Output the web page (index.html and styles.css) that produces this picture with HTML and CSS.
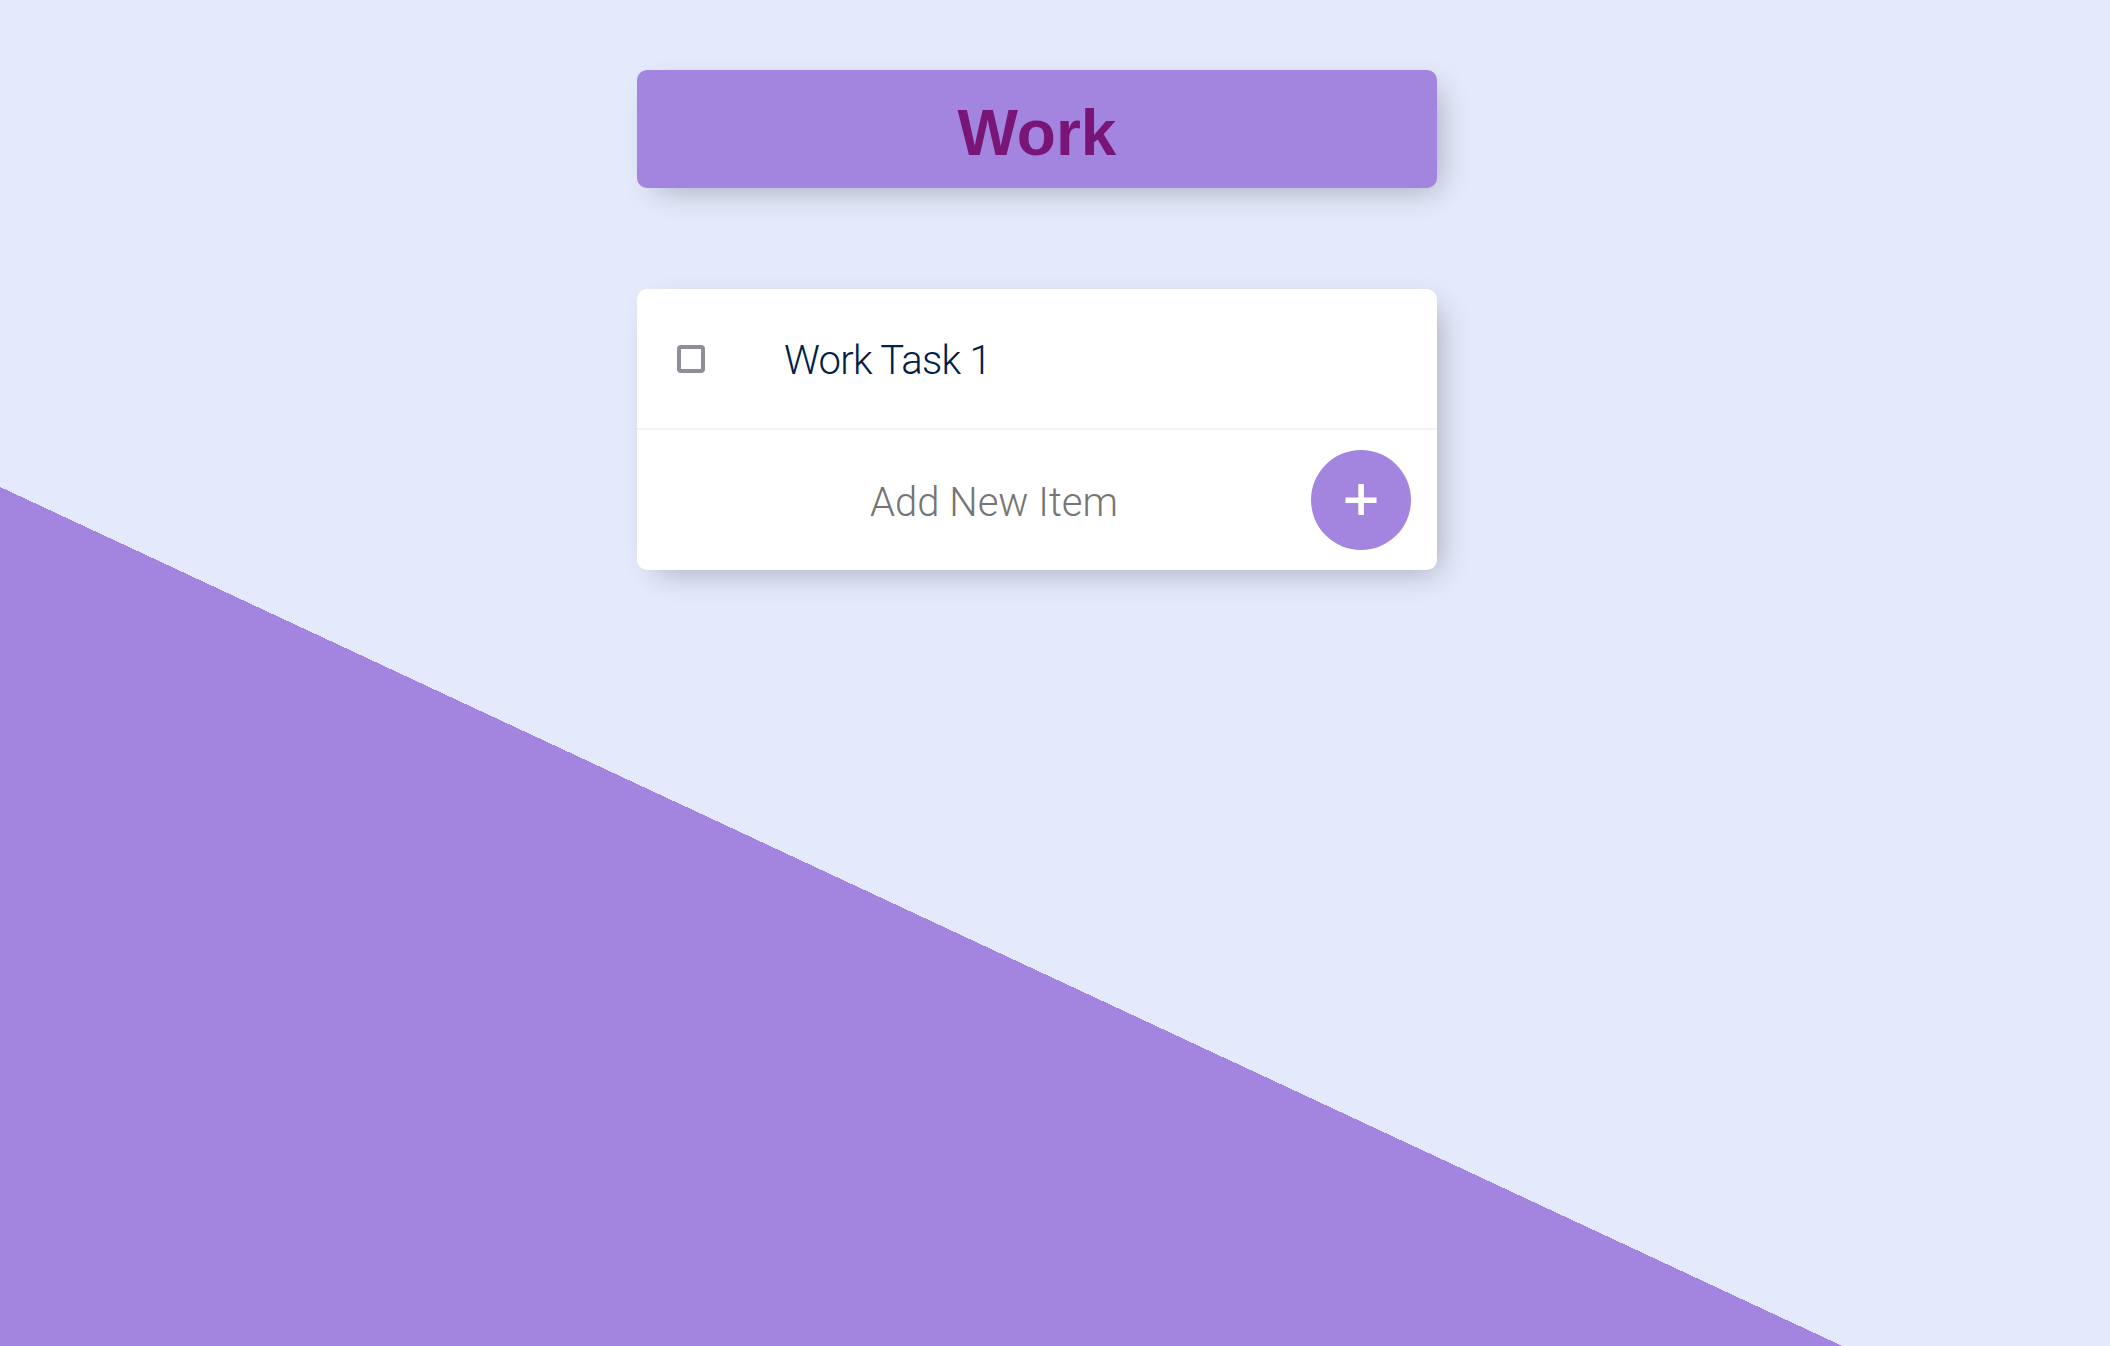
FILE: index.html
```html
<!DOCTYPE html>
<html lang="en">
<head>
<meta charset="utf-8">
<title>To-Do List</title>
<link rel="stylesheet" href="styles.css">
</head>
<body>
  <div class="box heading">
    <h1>Work</h1>
  </div>
  <div class="box list">
    <div class="item">
      <span class="check"></span>
      <p class="task">Work Task 1</p>
    </div>
    <form class="item add-form" onsubmit="return false">
      <input class="new-item" type="text" placeholder="Add New Item" autocomplete="off">
      <button class="add-btn" type="button" aria-label="Add">
        <svg width="32" height="32" viewBox="0 0 32 32"><rect x="0.5" y="13.5" width="31" height="5.5" fill="#fff"/><rect x="13.3" y="0" width="5.6" height="31" fill="#fff"/></svg>
      </button>
    </form>
  </div>
</body>
</html>
```

FILE: styles.css
```css
html {
  height: 100%;
  background-color: #E4E9FD;
  background-image: linear-gradient(25deg, #A385E0 778.6px, #E4E9FB 778.6px);
  font-family: "Roboto", "Liberation Sans", sans-serif;
}

body {
  margin: 0;
  min-height: 100%;
  padding: 70px 36px 0 0;
  box-sizing: border-box;
  display: flex;
  flex-direction: column;
  align-items: center;
}

.box {
  width: 800px;
  border-radius: 10px;
  box-shadow: 10px 10px 30px -10px rgba(0, 0, 0, 0.3);
}

.heading {
  background-color: #A385E0;
  height: 118px;
  box-sizing: border-box;
  padding-top: 26px;
  text-align: center;
}

.heading h1 {
  margin: 0;
  font-family: "Liberation Sans", Arial, sans-serif;
  font-weight: 700;
  font-size: 64px;
  line-height: 74px;
  color: #781577;
}

.list {
  margin-top: 101px;
  background: #fff;
  overflow: hidden;
}

.item {
  display: flex;
  align-items: center;
  height: 139px;
  border-bottom: 2px solid #F1F1F1;
}

.item:last-child {
  border-bottom: 0;
  height: 140px;
}

.check {
  width: 28px;
  height: 28px;
  box-sizing: border-box;
  border: 4px solid #8E8D98;
  border-radius: 4px;
  margin-left: 40px;
  flex: none;
}

.task {
  margin: 0 0 0 79px;
  padding-top: 4px;
  font-size: 40px;
  font-weight: 300;
  letter-spacing: -0.7px;
  color: #00204a;
}

.add-form {
  margin: 0;
  padding-left: 40px;
}

.new-item {
  width: 626px;
  height: 120px;
  box-sizing: border-box;
  padding: 5px 0 0 8px;
  border: none;
  outline: none;
  background: transparent;
  text-align: center;
  font-family: "Roboto", "Liberation Sans", sans-serif;
  font-size: 40px;
  font-weight: 300;
  color: #00204a;
}

.new-item::placeholder {
  color: #757575;
  opacity: 1;
}

.add-btn {
  width: 100px;
  height: 100px;
  margin-left: 8px;
  border: 0;
  border-radius: 50%;
  background-color: #A385E0;
  padding: 0;
  display: flex;
  align-items: center;
  justify-content: center;
}

.add-btn svg {
  display: block;
}
```
